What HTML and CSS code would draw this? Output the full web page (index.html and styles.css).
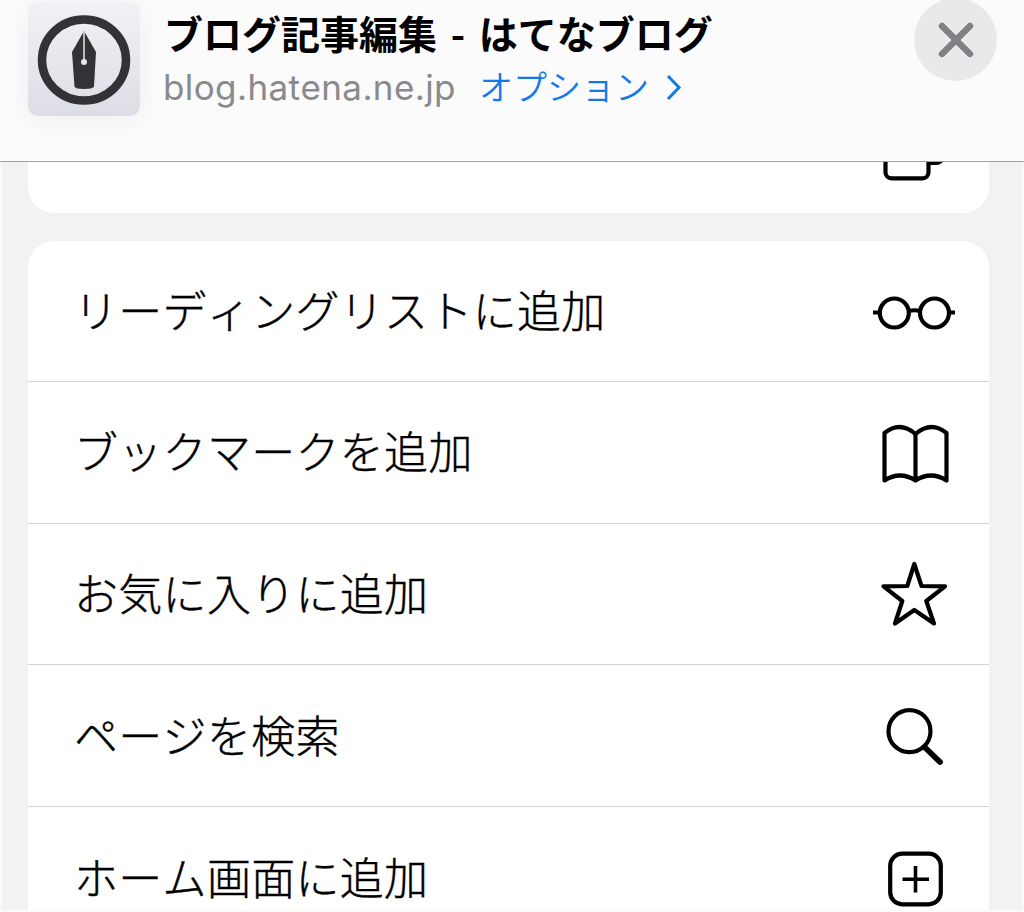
FILE: index.html
```html
<!DOCTYPE html>
<html lang="ja">
<head>
    <meta charset="UTF-8">
    <meta name="viewport" content="width=device-width, initial-scale=1.0">
    <title>ブログ記事編集 - はてなブログ</title>
    <link rel="stylesheet" href="styles.css">
</head>
<body>
    <div class="sheet">
        <header class="header">
            <div class="app-icon">
                <svg width="112" height="114" viewBox="0 0 112 114">
                    <ellipse cx="56" cy="58" rx="42" ry="40.5" fill="none" stroke="#333335" stroke-width="8.5"/>
                    <path d="M56 29 L68 50 L66 84.5 Q65 87 56 87 Q47 87 46.5 84.5 L44 50 Z" fill="#333335"/>
                    <path d="M56 29 V60" stroke="#c8c8cc" stroke-width="1.8"/>
                    <circle cx="56" cy="60" r="3" fill="#e8e8ee"/>
                </svg>
            </div>
            <div class="info">
                <h1>ブログ記事編集 <span class="dash">-</span> はてなブログ</h1>
                <div class="sub">
                    <span class="domain">blog.hatena.ne.jp</span>
                    <a class="options">オプション</a>
                    <svg width="18" height="28" viewBox="0 0 18 28">
                        <path d="M3 3 L14 14.5 L3 26" fill="none" stroke="#1478e8" stroke-width="3"/>
                    </svg>
                </div>
            </div>
            <button type="button" class="close">
                <svg width="84" height="84" viewBox="0 0 84 84">
                    <path d="M28 28 L56 56 M56 28 L28 56" stroke="#808084" stroke-width="6.5" stroke-linecap="round"/>
                </svg>
            </button>
        </header>

        <main class="content">
            <ul class="card card-top">
                <li class="row">
                    <svg class="icon" width="84" height="84" viewBox="0 0 84 84">
                        <rect x="25" y="19" width="45" height="43" rx="7"/>
                        <rect x="12.5" y="34.3" width="43" height="43" rx="6" fill="#fff"/>
                    </svg>
                </li>
            </ul>

            <ul class="card">
                <li class="row">
                    <span>リーディングリストに追加</span>
                    <svg class="icon" width="84" height="84" viewBox="0 0 84 84">
                        <circle cx="21.3" cy="43" r="14.5"/>
                        <circle cx="61.5" cy="43" r="14.5"/>
                        <path d="M0 42.5 H7 M36 41 Q41.5 39.5 47 41 M76 42.5 H82"/>
                    </svg>
                </li>
                <li class="row">
                    <span>ブックマークを追加</span>
                    <svg class="icon" width="84" height="84" viewBox="0 0 84 84">
                        <path d="M42.5 22 Q27 8.5 11.5 21 V68.5 Q27 58.5 42.5 68.5 Q58 58.5 73.5 68.5 V21 Q58 8.5 42.5 22 V68"/>
                    </svg>
                </li>
                <li class="row">
                    <span>お気に入りに追加</span>
                    <svg class="icon" width="84" height="84" viewBox="0 0 84 84">
                        <path d="M41.3 10 L48.5 32 L72 32.3 L53.3 47 L61 69.5 L41.3 56 L22 69.5 L29.3 47 L10.5 32.3 L34.3 32 Z"/>
                    </svg>
                </li>
                <li class="row">
                    <span>ページを検索</span>
                    <svg class="icon" width="84" height="84" viewBox="0 0 84 84">
                        <circle cx="36.5" cy="36.2" r="21"/>
                        <path class="handle" d="M52 52.5 L67 67"/>
                    </svg>
                </li>
                <li class="row">
                    <span>ホーム画面に追加</span>
                    <svg class="icon" width="84" height="84" viewBox="0 0 84 84">
                        <rect x="17.2" y="16.7" width="50.6" height="50.6" rx="12"/>
                        <path class="plus" d="M42.5 29 V55.5 M29.5 42.2 H56"/>
                    </svg>
                </li>
            </ul>
        </main>
    </div>
</body>
</html>
```

FILE: styles.css
```css
* {
    box-sizing: border-box;
}
body {
    margin: 0;
    font-family: Inter, "Noto Sans CJK JP", sans-serif;
    background-color: #fbfbfb;
    color: #000;
    font-kerning: none;
}
.sheet {
    display: flex;
    flex-direction: column;
    height: 912px;
    overflow: hidden;
}
.header {
    display: flex;
    align-items: flex-start;
    flex: none;
    height: 162px;
    padding: 0 27px 0 28px;
    background-color: #fbfbfc;
    border-bottom: 1px solid #a2a2a4;
}
.app-icon {
    width: 112px;
    height: 114px;
    margin-top: 2px;
    border-radius: 10px;
    background: linear-gradient(#f1f1f6, #dddde5);
    box-shadow: 0 4px 26px rgba(0, 0, 0, 0.05);
}
.info {
    flex: 1;
    padding: 5px 0 0 24px;
}
h1 {
    margin: 0;
    font-family: "Noto Sans CJK JP", sans-serif;
    font-size: 39px;
    font-weight: 700;
    line-height: 54px;
    white-space: nowrap;
}
.dash {
    display: inline-block;
    width: 24px;
    text-align: center;
}
.sub {
    display: flex;
    align-items: center;
    height: 56px;
    font-size: 35px;
}
.domain {
    margin-left: -1px;
    color: #8a8a8d;
    letter-spacing: 0.4px;
}
.options {
    margin: -3px 16px 0 23px;
    color: #1478e8;
    font-family: "Noto Sans CJK JP", sans-serif;
    font-size: 34px;
    font-weight: 350;
}
.close {
    width: 83px;
    height: 83px;
    margin-top: -2px;
    padding: 0;
    border: none;
    border-radius: 50%;
    background-color: #e9e9eb;
}
.content {
    flex: 1;
    min-height: 0;
    overflow: hidden;
    padding: 0 33px 0 26px;
    background-color: #f2f2f2;
    border: solid #fbfbfb;
    border-width: 0 2px 2px;
}
.card {
    margin: 0 0 28px;
    padding: 0;
    list-style: none;
    background-color: #fff;
    border-radius: 26px;
}
.card-top {
    margin-top: -91px;
}
.row {
    display: flex;
    align-items: center;
    justify-content: space-between;
    height: 141.6px;
    padding: 0 32px 0 46px;
    border-bottom: 1.4px solid #d2d2d4;
    font-family: "Noto Sans CJK JP", sans-serif;
    font-size: 44px;
    font-weight: 300;
    letter-spacing: 0.3px;
}
.row:last-child {
    border-bottom: none;
}
.row span {
    padding-bottom: 4px;
    -webkit-text-stroke: 0.4px #000;
}
.card-top .row {
    justify-content: flex-end;
}
.icon {
    flex: none;
    margin-top: 3px;
    fill: none;
    stroke: #000;
    stroke-width: 4.2;
    stroke-linejoin: round;
}
.icon .handle {
    stroke-width: 5.8;
    stroke-linecap: round;
}
.icon .plus {
    stroke-width: 3.6;
}
```
